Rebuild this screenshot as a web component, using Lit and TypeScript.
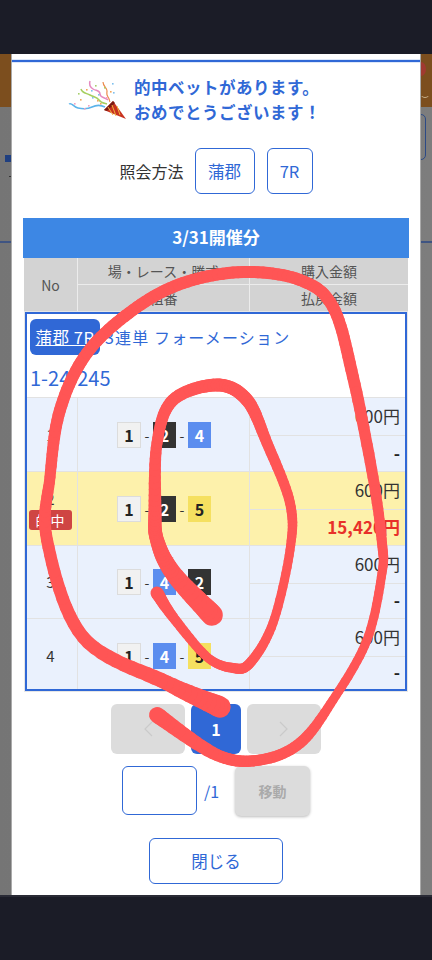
import { LitElement, html, css, svg } from "lit";
import { customElement } from "lit/decorators.js";

type P = [number, number, number];

const OUTER: P[] = [
  [220, 707, 22], [167, 683, 15], [83, 637, 13], [47, 540, 12], [50, 477, 11], [60, 410, 12], [87, 353, 12],
  [133, 310, 12], [183, 283, 12], [243, 272, 12], [300, 280, 12], [333, 307, 12], [353, 377, 12], [373, 477, 11],
  [382, 543, 10], [382, 573, 9], [367, 640, 9], [333, 700, 9], [300, 743, 11], [260, 760, 11], [217, 755, 12], [157, 715, 16],
];
const INNER: P[] = [
  [212, 615, 22], [173, 573, 17], [157, 540, 14], [155, 510, 13], [157, 443, 11], [173, 400, 12], [217, 385, 13],
  [247, 400, 13], [267, 443, 11], [290, 503, 10], [290, 550, 9], [273, 623, 9], [250, 663, 10], [233, 668, 10],
  [207, 657, 9], [173, 617, 10], [157, 593, 13],
];

function sample(pts: P[]): P[] {
  const out: P[] = [];
  for (let i = 0; i < pts.length - 1; i++) {
    const a = pts[Math.max(i - 1, 0)], b = pts[i], c = pts[i + 1], d = pts[Math.min(i + 2, pts.length - 1)];
    for (let s = 0; s < 12; s++) {
      const t = s / 12, t2 = t * t, t3 = t2 * t;
      const f = (k: number) => 0.5 * (2 * b[k] + (c[k] - a[k]) * t + (2 * a[k] - 5 * b[k] + 4 * c[k] - d[k]) * t2 + (3 * b[k] - a[k] - 3 * c[k] + d[k]) * t3);
      out.push([f(0), f(1), b[2] + (c[2] - b[2]) * t]);
    }
  }
  out.push(pts[pts.length - 1]);
  return out;
}

function stroke(pts: P[]) {
  const s = sample(pts);
  return s.slice(1).map((p, i) => svg`<line x1=${s[i][0].toFixed(1)} y1=${s[i][1].toFixed(1)} x2=${p[0].toFixed(1)} y2=${p[1].toFixed(1)} stroke-width=${p[2].toFixed(1)}></line>`);
}

const BOX: Record<number, string> = { 1: "w", 2: "k", 4: "b", 5: "y" };
const ROWS = [
  { no: 1, combo: [1, 2, 4], pay: "-", hit: false },
  { no: 2, combo: [1, 2, 5], pay: "15,420円", hit: true },
  { no: 3, combo: [1, 4, 2], pay: "-", hit: false },
  { no: 4, combo: [1, 4, 5], pay: "-", hit: false },
];

@customElement("app-root")
export class AppRoot extends LitElement {
  static styles = css`
    :host { display: block; width: 432px; height: 960px; overflow: hidden; position: relative;
      font-family: "Noto Sans CJK JP", "Noto Sans", sans-serif; color: #333; }
    * { box-sizing: border-box; }
    .page { display: grid; grid-template-rows: 54px 841px 65px; height: 960px; background: #1b1c27; }
    .stage { display: grid; background: #7a7a7a; position: relative; overflow: hidden; }
    .backdrop { grid-area: 1 / 1; display: flex; flex-direction: column; }
    .orange { height: 53px; background: #7c4e1e; flex: none; position: relative; }
    .gray { flex: 1; background: linear-gradient(90deg, #757575, #7d7d7d); position: relative; }
    .dot { position: absolute; left: 416px; top: 8px; width: 10px; height: 14px; border-radius: 50%; background: #a03a30; }
    .smile { position: absolute; left: 420px; top: 34px; width: 10px; height: 10px; border: 1px solid transparent; border-bottom-color: #c9b38f; border-radius: 50%; }
    .sq { position: absolute; left: 5px; top: 48px; width: 7px; height: 7px; background: #1f3f80; }
    .mark { position: absolute; left: 9px; top: 69px; width: 3px; height: 1px; background: #333; }
    .rbox { position: absolute; left: 410px; top: 7px; width: 16px; height: 46px; border: 1px solid #2c4a86; border-radius: 5px; }
    .hline { position: absolute; left: 0; right: 0; top: 134px; height: 2px; background: #3f5482; }
    .modal { grid-area: 1 / 1; margin: 0 12px; background: #fff; box-shadow: -1px 0 0 #aaa, 1px 0 0 #aaa;
      display: flex; flex-direction: column; padding-top: 6px; position: relative; }
    .topline { height: 2px; background: #3068d6; box-shadow: 0 1px 0 #dde7f8, 0 -1px 0 #dde7f8; flex: none; }
    .title { display: flex; align-items: center; margin: 13px 0 0 56px; gap: 7px; }
    .title svg { flex: none; }
    .title-text { color: #3068d6; font-weight: 700; font-size: 16.5px; line-height: 25px; letter-spacing: 0.5px; white-space: nowrap; margin-left: -1px; }
    .query { display: flex; align-items: center; justify-content: center; margin-top: 23px; height: 46px; }
    .query .lbl { font-size: 16px; margin-right: 11px; color: #333; }
    .qbtn { height: 46px; border: 1px solid #3068d6; border-radius: 6px; color: #3068d6; font-size: 16.5px; display: flex; align-items: center; justify-content: center; }
    .q1 { width: 60px; margin-right: 12px; }
    .q2 { width: 46px; }
    .table { margin: 24px 11px 0; width: 386px; flex: none; }
    .tcap { height: 40px; background: #3d87e4; color: #fff; font-weight: 700; font-size: 17px; padding-bottom: 3px; display: flex; align-items: center; justify-content: center; }
    .thead { display: grid; grid-template-columns: 53px 172px 1fr; grid-template-rows: 26px 27px; background: #d3d3d3; margin: 0 1px;
      font-size: 14px; color: #555; text-align: center; }
    .thead > div { display: flex; align-items: center; justify-content: center; border-left: 1px solid #ececec; }
    .thead .no { grid-row: 1 / 3; border-left: none; }
    .thead .low { border-top: 1px solid #ececec; }
    .box { border: 2px solid #3068d6; margin: 1px 2px 0; box-shadow: 0 0 0 1px #e6e6e6; background: #fff; }
    .bhead { height: 83px; padding: 5px 3px 0; color: #3068d6; }
    .bl1 { display: flex; align-items: center; height: 36px; font-size: 16px; letter-spacing: 1.15px; white-space: nowrap; }
    .vbtn { width: 70px; height: 36px; background: #3068d6; color: #fff; border-radius: 6px; text-decoration: underline; font-size: 16.5px; display: flex; align-items: center; justify-content: center; margin-right: 5px; letter-spacing: 0.5px; flex: none; }
    .bl2 { font-size: 20px; line-height: 28px; margin-top: 9px; white-space: nowrap; }
    .row { display: grid; grid-template-columns: 50px 172px 1fr; height: 74px; background: #eaf1fd; border-top: 1px solid #e2e2e2; }
    .row.hit { background: #fdf1ab; }
    .row:nth-child(4) { height: 73px; }
    .row:last-child { height: 71px; }
    .row:last-child .cno, .row:last-child .cmb { padding-top: 3px; }
    .cno { display: flex; flex-direction: column; align-items: center; justify-content: center; font-size: 15px; line-height: 22px; padding-right: 3px; }
    .badge { width: 43px; height: 20px; background: #cf4543; color: #fff; border-radius: 3px; font-size: 14px; line-height: 20px; text-align: center; letter-spacing: 1px; }
    .cmb { border-left: 1px solid #e2e2e2; display: flex; align-items: center; justify-content: center; font-size: 14px; padding-left: 1px; }
    .n { width: 23px; height: 26px; display: flex; align-items: center; justify-content: center; font-weight: 700; font-size: 16px; }
    .n.w { width: 24px; background: #f1f1f1; color: #222; box-shadow: inset 0 0 0 1px #dcdcdc; }
    .n.k { background: #333; color: #fff; }
    .n.b { background: #5b8def; color: #fff; }
    .n.y { background: #f5e060; color: #222; }
    .sep { width: 12px; text-align: center; }
    .money { border-left: 1px solid #e2e2e2; display: grid; grid-template-rows: 37px 1fr; }
    .money > div { display: flex; align-items: center; justify-content: flex-end; padding: 0 5px 3px 0; font-size: 17px; }
    .pay { border-top: 1px solid #e2e2e2; }
    .pay.dash { font-weight: 700; color: #222; }
    .pay.red { color: #e8302a; font-weight: 700; }
    .pager { display: flex; justify-content: center; gap: 6px; margin-top: 13px; }
    .pg { height: 50px; border-radius: 6px; background: #dcdcdc; display: flex; align-items: center; justify-content: center; }
    .pg.arrow { width: 74px; }
    .pg.cur { width: 50px; background: #3068d6; color: #fff; font-weight: 700; font-size: 16px; }
    .jump { display: flex; align-items: flex-start; margin: 12px 0 0 110px; height: 50px; }
    .inp { width: 75px; height: 49px; border: 1px solid #3068d6; border-radius: 6px; background: #fff; }
    .of { color: #3068d6; font-size: 16px; line-height: 50px; margin-left: 7px; width: 31px; }
    .go { width: 75px; height: 50px; border-radius: 6px; background: #dcdcdc; color: #aaa; font-weight: 700; font-size: 14px; box-shadow: 0 1px 3px #bbb; display: flex; align-items: center; justify-content: center; }
    .close { align-self: center; width: 134px; height: 46px; margin-top: 22px; border: 1px solid #3068d6; border-radius: 6px; color: #3068d6; font-size: 16.5px; display: flex; align-items: center; justify-content: center; }
    .edge { height: 2px; background: #2a2b36; }
    .scribble { position: absolute; left: 0; top: 0; width: 432px; height: 960px; pointer-events: none; fill: none; stroke: #ff5555; stroke-linecap: round; }
  `;

  private confetti() {
    const dots: [number, number, string][] = [
      [86, 88, "#f2a65a"], [80, 98, "#f2a65a"], [74, 102, "#f2a1c0"], [92, 96, "#7ec0ee"], [88, 104, "#f2a1c0"], [98, 93, "#7ec0ee"],
      [104, 86, "#a6d06a"], [110, 90, "#f2a65a"], [112, 82, "#7ec0ee"], [95, 84, "#a6d06a"], [100, 102, "#f2a65a"], [84, 107, "#f2a1c0"], [106, 96, "#f2a1c0"], [78, 92, "#a6d06a"],
      [113, 91, "#7ec0ee"], [97, 99, "#f2a65a"], [91, 89, "#7ec0ee"],
    ];
    return html`<svg width="60" height="41" viewBox="68 79 60 41" aria-hidden="true">
      <path d="M69 103c3-2 4 3 9 4s10 1 14-1 9-2 13 0" fill="none" stroke="#5cb4ea" stroke-width="1.5"/>
      <path d="M81 88c1 4 5 4 9 6s7 2 9 5 4 3 8 4" fill="none" stroke="#a6cf5e" stroke-width="1.5"/>
      <path d="M90 80c-1 3 0 6 3 8s7 1 7 5 5 3 8 6" fill="none" stroke="#e58ac0" stroke-width="1.5"/>
      <path d="M103 81c0 4 4 6 4 9s-1 3 1 6 1 3 2 5" fill="none" stroke="#ec8a4a" stroke-width="1.2"/>
      ${dots.map(([x, y, c]) => svg`<rect x=${x} y=${y} width="1.6" height="1.6" fill=${c}></rect>`)}
      <path d="M113 100l13 18-22-9z" fill="#c8321f"/>
      <path d="M113 100l-9 9 3 1 8-8z" fill="#7a1a12"/>
      <path d="M112 104l4 11M108 106l5 8M117 105l3 9" stroke="#f0b23c" stroke-width="1" fill="none"/>
    </svg>`;
  }

  private chevron(left: boolean) {
    return html`<svg width="12" height="18" viewBox="0 0 12 18" aria-hidden="true"><path d=${left ? "M10 2 3 9l7 7" : "M2 2l7 7-7 7"} fill="none" stroke="#cacaca" stroke-width="1.2"/></svg>`;
  }

  render() {
    return html`
      <div class="page">
        <div></div>
        <div class="stage">
          <div class="backdrop">
            <div class="orange"><div class="dot"></div><div class="smile"></div></div>
            <div class="gray"><div class="sq"></div><div class="mark"></div><div class="rbox"></div><div class="hline"></div></div>
          </div>
          <div class="modal">
            <div class="topline"></div>
            <div class="title">
              ${this.confetti()}
              <div class="title-text">的中ベットがあります。<br />おめでとうございます&#xFF01;</div>
            </div>
            <div class="query">
              <span class="lbl">照会方法</span>
              <div class="qbtn q1">蒲郡</div>
              <div class="qbtn q2">7R</div>
            </div>
            <div class="table">
              <div class="tcap">3/31開催分</div>
              <div class="thead">
                <div class="no">No</div>
                <div>場・レース・勝式</div>
                <div>購入金額</div>
                <div class="low">組番</div>
                <div class="low">払戻金額</div>
              </div>
              <div class="box">
                <div class="bhead">
                  <div class="bl1"><span class="vbtn">蒲郡 7R</span>3連単 フォーメーション</div>
                  <div class="bl2">1-24-245</div>
                </div>
                ${ROWS.map((r) => html`
                  <div class="row ${r.hit ? "hit" : ""}">
                    <div class="cno">${r.no}${r.hit ? html`<span class="badge">的中</span>` : ""}</div>
                    <div class="cmb">
                      ${r.combo.map((n, i) => html`${i ? html`<span class="sep">-</span>` : ""}<span class="n ${BOX[n]}">${n}</span>`)}
                    </div>
                    <div class="money">
                      <div>600円</div>
                      <div class="pay ${r.hit ? "red" : "dash"}">${r.pay}</div>
                    </div>
                  </div>`)}
              </div>
            </div>
            <div class="pager">
              <div class="pg arrow">${this.chevron(true)}</div>
              <div class="pg cur">1</div>
              <div class="pg arrow">${this.chevron(false)}</div>
            </div>
            <div class="jump">
              <div class="inp"></div>
              <span class="of">/1</span>
              <div class="go">移動</div>
            </div>
            <div class="close">閉じる</div>
          </div>
        </div>
        <div class="edge"></div>
      </div>
      <svg class="scribble" viewBox="0 0 432 960" aria-hidden="true">${stroke(OUTER)}${stroke(INNER)}</svg>
    `;
  }
}
